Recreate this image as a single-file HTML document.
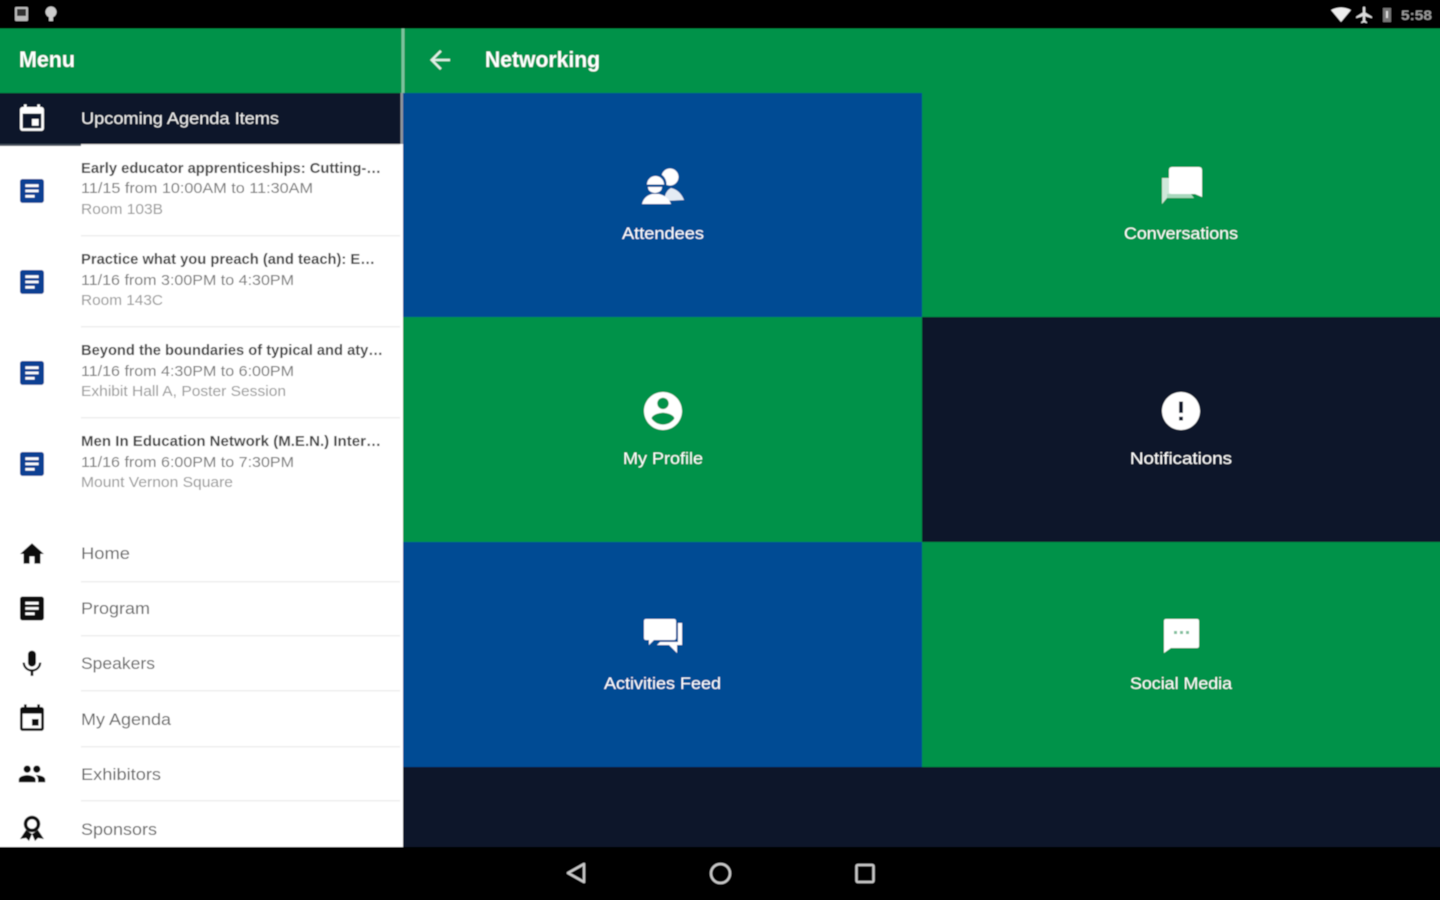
<!DOCTYPE html>
<html lang="en"><head><meta charset="utf-8"><title>Networking</title>
<style>
html,body{margin:0;padding:0;width:1440px;height:900px;overflow:hidden;background:#000}
svg{display:block}
text{font-family:"Liberation Sans",sans-serif}
.t{font-size:15px;font-weight:700;fill:#444}
.d{font-size:15px;fill:#777}
.r{font-size:15px;fill:#999}
.m{font-size:17px;fill:#666}
.l{font-size:17px;fill:#fff;text-anchor:start}
</style></head><body>
<svg width="1440" height="900" viewBox="0 0 1440 900" xmlns="http://www.w3.org/2000/svg">
<defs><filter id="b" filterUnits="userSpaceOnUse" x="-20" y="-20" width="1480" height="940"><feGaussianBlur stdDeviation="0.55"/></filter></defs>
<g filter="url(#b)">
<rect x="-20" y="-20" width="1480" height="940" fill="#000"/>
<!-- status bar -->
<rect x="15" y="7" width="13" height="14" rx="1" fill="#bbb"/><rect x="17" y="9" width="9" height="7" fill="#333"/>
<circle cx="51" cy="12" r="5.500" fill="#ccc"/><rect x="49" y="17" width="4" height="4" fill="#ccc"/>
<path d="M1331 10q10-5 20 0l-10 12z" fill="#eee"/>
<g transform="translate(1354.500 5) scale(.83)"><path fill="#ddd" d="M21 16v-2l-8-5V3.500c0-.83-.67-1.500-1.500-1.500S10 2.670 10 3.500V9l-8 5v2l8-2.500V19l-2 1.500V22l3.500-1 3.500 1v-1.500L13 19v-5.500l8 2.500z"/></g>
<rect x="1383" y="8" width="8" height="14" fill="#777"/><rect x="1386" y="11" width="2" height="7" fill="#ddd"/>
<text x="1401" y="20" font-size="14" font-weight="700" fill="#999" textLength="31" lengthAdjust="spacingAndGlyphs">5:58</text>

<!-- headers -->
<rect x="-20" y="28.500" width="1480" height="64.500" fill="#01924a"/>
<rect x="401.500" y="28.500" width="3" height="64.500" fill="#7cc39e"/>
<text x="19" y="67" font-size="22" font-weight="700" fill="#fff" textLength="56" lengthAdjust="spacingAndGlyphs">Menu</text>
<g transform="translate(425 45) scale(1.250)"><path fill="#dff0e6" d="M20 11H7.830l5.590-5.590L12 4l-8 8 8 8 1.410-1.410L7.830 13H20v-2z"/></g>
<text x="485" y="67" font-size="22" font-weight="700" fill="#fff" textLength="115" lengthAdjust="spacingAndGlyphs">Networking</text>

<!-- tiles -->
<rect x="403" y="93" width="519" height="224" fill="#014c94"/>
<rect x="922" y="93" width="538" height="224" fill="#01924a"/>
<rect x="403" y="317" width="519" height="225" fill="#01924a"/>
<rect x="922" y="317" width="538" height="225" fill="#0b1829"/>
<rect x="403" y="542" width="519" height="225" fill="#014c94"/>
<rect x="922" y="542" width="538" height="225" fill="#01924a"/>
<rect x="403" y="767" width="1057" height="80" fill="#0b1829"/>

<!-- attendees -->
<circle cx="670" cy="177" r="8.500" fill="#fff"/>
<path d="M664 201q1-10 7-13 9 2 13 12z" fill="#e4ebf4"/>
<circle cx="655" cy="184" r="11.500" fill="#014c94"/>
<path d="M647 184.500a8.500 8.500 0 0 1 17 0z" fill="#fff"/>
<path d="M648 187h14q0 5-7 6-7-1-7-6z" fill="#fff"/>
<path d="M642 204q2-8 10-10h7q9 2 12 10z" fill="#fff"/>
<text x="622" y="239" class="l" textLength="82" lengthAdjust="spacingAndGlyphs">Attendees</text>

<!-- conversations -->
<path d="M1162 178h8v20h-3l-5 6z" fill="#cfe8da"/>
<path d="M1172 167h27q3 0 3 3v27l-7-3h-24q-2 0-2-2v-22q0-3 3-3z" fill="#fff"/>
<path d="M1167 198h27l-3-4h-24z" fill="#a8d8bd"/>
<text x="1124" y="239" class="l" textLength="114" lengthAdjust="spacingAndGlyphs">Conversations</text>

<!-- profile -->
<g transform="translate(640.200 388.200) scale(1.900)"><path fill="#fff" d="M12 2C6.480 2 2 6.480 2 12s4.480 10 10 10 10-4.480 10-10S17.520 2 12 2zm0 3c1.660 0 3 1.340 3 3s-1.340 3-3 3-3-1.340-3-3 1.340-3 3-3zm0 14.200c-2.500 0-4.710-1.280-6-3.220.03-1.990 4-3.080 6-3.080 1.990 0 5.970 1.090 6 3.080-1.290 1.940-3.500 3.220-6 3.220z"/></g>
<text x="623" y="464" class="l" textLength="80" lengthAdjust="spacingAndGlyphs">My Profile</text>

<!-- notifications -->
<g transform="translate(1158.200 388.200) scale(1.900)"><path fill="#fff" d="M12 2C6.480 2 2 6.480 2 12s4.480 10 10 10 10-4.480 10-10S17.520 2 12 2zm1 15h-2v-2h2v2zm0-4h-2V7h2v6z"/></g>
<text x="1130" y="464" class="l" textLength="102" lengthAdjust="spacingAndGlyphs">Notifications</text>

<!-- activities -->
<path d="M646 619h28q2 0 2 2v17q0 2-2 2h-20l-5 5v-5h-3q-2 0-2-2v-17q0-2 2-2z" fill="#fff"/>
<path d="M678 623h4v22h-5v8l-8-8h-12l3-3h18z" fill="#fff"/>
<text x="604" y="689" class="l" textLength="117" lengthAdjust="spacingAndGlyphs">Activities Feed</text>

<!-- social -->
<path d="M1166 619h31q2 0 2 2v25q0 2-2 2h-26l-7 5v-32q0-2 2-2z" fill="#fff"/>
<rect x="1174" y="631" width="3" height="3" fill="#7fbf9d"/><rect x="1180" y="631" width="3" height="3" fill="#7fbf9d"/><rect x="1186" y="631" width="3" height="3" fill="#7fbf9d"/>
<text x="1130" y="689" class="l" textLength="102" lengthAdjust="spacingAndGlyphs">Social Media</text>

<!-- sidebar -->
<rect x="-20" y="93" width="423" height="754" fill="#fff"/>
<rect x="-20" y="93" width="420.500" height="51" fill="#0b1829"/>
<rect x="400.500" y="93" width="2.500" height="51" fill="#8f959c"/>
<rect x="-20" y="144" width="101" height="2" fill="#4a5260"/>
<rect x="81" y="144" width="319" height="1" fill="#ddd"/>
<g transform="translate(16 103) scale(1.330)"><path fill="#fff" d="M17 12h-5v5h5v-5zM16 1v2H8V1H6v2H5c-1.110 0-1.990.9-1.990 2L3 19c0 1.100.89 2 2 2h14c1.100 0 2-.9 2-2V5c0-1.100-.9-2-2-2h-1V1h-2zm3 18H5V8h14v11z"/></g>
<text x="81" y="124" font-size="17" fill="#eee" textLength="198" lengthAdjust="spacingAndGlyphs">Upcoming Agenda Items</text>

<!-- agenda items -->
<g fill="#0f3f93">
<path transform="translate(16 175) scale(1.330)" d="M19 3H5c-1.100 0-2 .9-2 2v14c0 1.100.9 2 2 2h14c1.100 0 2-.9 2-2V5c0-1.100-.9-2-2-2zm-5 14H7v-2h7v2zm3-4H7v-2h10v2zm0-4H7V7h10v2z"/>
<path transform="translate(16 266) scale(1.330)" d="M19 3H5c-1.100 0-2 .9-2 2v14c0 1.100.9 2 2 2h14c1.100 0 2-.9 2-2V5c0-1.100-.9-2-2-2zm-5 14H7v-2h7v2zm3-4H7v-2h10v2zm0-4H7V7h10v2z"/>
<path transform="translate(16 357) scale(1.330)" d="M19 3H5c-1.100 0-2 .9-2 2v14c0 1.100.9 2 2 2h14c1.100 0 2-.9 2-2V5c0-1.100-.9-2-2-2zm-5 14H7v-2h7v2zm3-4H7v-2h10v2zm0-4H7V7h10v2z"/>
<path transform="translate(16 448) scale(1.330)" d="M19 3H5c-1.100 0-2 .9-2 2v14c0 1.100.9 2 2 2h14c1.100 0 2-.9 2-2V5c0-1.100-.9-2-2-2zm-5 14H7v-2h7v2zm3-4H7v-2h10v2zm0-4H7V7h10v2z"/>
</g>
<text x="81" y="173" class="t" textLength="300" lengthAdjust="spacingAndGlyphs">Early educator apprenticeships: Cutting-…</text>
<text x="81" y="193" class="d" textLength="232" lengthAdjust="spacingAndGlyphs">11/15 from 10:00AM to 11:30AM</text>
<text x="81" y="214" class="r" textLength="82" lengthAdjust="spacingAndGlyphs">Room 103B</text>
<rect x="81" y="235" width="319" height="1.500" fill="#eee"/>
<text x="81" y="264" class="t" textLength="294" lengthAdjust="spacingAndGlyphs">Practice what you preach (and teach): E…</text>
<text x="81" y="285" class="d" textLength="213" lengthAdjust="spacingAndGlyphs">11/16 from 3:00PM to 4:30PM</text>
<text x="81" y="305" class="r" textLength="82" lengthAdjust="spacingAndGlyphs">Room 143C</text>
<rect x="81" y="326" width="319" height="1.500" fill="#eee"/>
<text x="81" y="355" class="t" textLength="302" lengthAdjust="spacingAndGlyphs">Beyond the boundaries of typical and aty…</text>
<text x="81" y="376" class="d" textLength="213" lengthAdjust="spacingAndGlyphs">11/16 from 4:30PM to 6:00PM</text>
<text x="81" y="396" class="r" textLength="205" lengthAdjust="spacingAndGlyphs">Exhibit Hall A, Poster Session</text>
<rect x="81" y="417" width="319" height="1.500" fill="#eee"/>
<text x="81" y="446" class="t" textLength="300" lengthAdjust="spacingAndGlyphs">Men In Education Network (M.E.N.) Inter…</text>
<text x="81" y="467" class="d" textLength="213" lengthAdjust="spacingAndGlyphs">11/16 from 6:00PM to 7:30PM</text>
<text x="81" y="487" class="r" textLength="152" lengthAdjust="spacingAndGlyphs">Mount Vernon Square</text>

<!-- menu -->
<g fill="#111">
<path transform="translate(17.600 539.600) scale(1.200)" d="M10 20v-6h4v6h5v-8h3L12 3 2 12h3v8z"/>
<path transform="translate(16 592.500) scale(1.330)" d="M19 3H5c-1.100 0-2 .9-2 2v14c0 1.100.9 2 2 2h14c1.100 0 2-.9 2-2V5c0-1.100-.9-2-2-2zm-5 14H7v-2h7v2zm3-4H7v-2h10v2zm0-4H7V7h10v2z"/>
<path transform="translate(16 648) scale(1.330)" d="M12 14c1.660 0 2.990-1.340 2.990-3L15 5c0-1.660-1.340-3-3-3S9 3.340 9 5v6c0 1.660 1.340 3 3 3zm5.300-3c0 3-2.540 5.100-5.300 5.100S6.700 14 6.700 11H5c0 3.410 2.720 6.230 6 6.720V21h2v-3.280c3.280-.48 6-3.300 6-6.720h-1.700z"/>
<path transform="translate(16 703) scale(1.330)" d="M17 12h-5v5h5v-5zM16 1v2H8V1H6v2H5c-1.110 0-1.990.9-1.990 2L3 19c0 1.100.89 2 2 2h14c1.100 0 2-.9 2-2V5c0-1.100-.9-2-2-2h-1V1h-2zm3 18H5V8h14v11z"/>
<path transform="translate(17.600 759.500) scale(1.200)" d="M16 11c1.660 0 2.990-1.340 2.990-3S17.660 5 16 5c-1.660 0-3 1.340-3 3s1.340 3 3 3zm-8 0c1.660 0 2.990-1.340 2.990-3S9.660 5 8 5C6.340 5 5 6.340 5 8s1.340 3 3 3zm0 2c-2.330 0-7 1.170-7 3.500V19h14v-2.500c0-2.330-4.670-3.500-7-3.500zm8 0c-.29 0-.62.02-.97.05 1.160.84 1.970 1.970 1.970 3.450V19h6v-2.500c0-2.330-4.670-3.500-7-3.500z"/>
<circle cx="32" cy="824" r="6.500" fill="none" stroke="#111" stroke-width="3.500"/>
<path d="M26 830l-6 9 6-1 3 3 3-7zM38 830l6 9-6-1-3 3-3-7z"/>
</g>
<text x="81" y="559" class="m" textLength="49" lengthAdjust="spacingAndGlyphs">Home</text>
<rect x="81" y="581" width="319" height="1.500" fill="#eee"/>
<text x="81" y="614" class="m" textLength="69" lengthAdjust="spacingAndGlyphs">Program</text>
<rect x="81" y="635" width="319" height="1.500" fill="#eee"/>
<text x="81" y="669" class="m" textLength="74" lengthAdjust="spacingAndGlyphs">Speakers</text>
<rect x="81" y="690" width="319" height="1.500" fill="#eee"/>
<text x="81" y="725" class="m" textLength="90" lengthAdjust="spacingAndGlyphs">My Agenda</text>
<rect x="81" y="746" width="319" height="1.500" fill="#eee"/>
<text x="81" y="780" class="m" textLength="80" lengthAdjust="spacingAndGlyphs">Exhibitors</text>
<rect x="81" y="800" width="319" height="1.500" fill="#eee"/>
<text x="81" y="835" class="m" textLength="76" lengthAdjust="spacingAndGlyphs">Sponsors</text>

<!-- nav bar -->
<rect x="-20" y="847" width="1480" height="73" fill="#000"/>
<g fill="none" stroke="#c8c8c8" stroke-width="2.500" stroke-linejoin="round">
<path d="M584 864v18l-16-9z"/>
<circle cx="720.500" cy="873.500" r="9.500"/>
<rect x="856.500" y="865" width="17" height="17" rx="1.500"/>
</g>
</g>
</svg>
</body></html>
